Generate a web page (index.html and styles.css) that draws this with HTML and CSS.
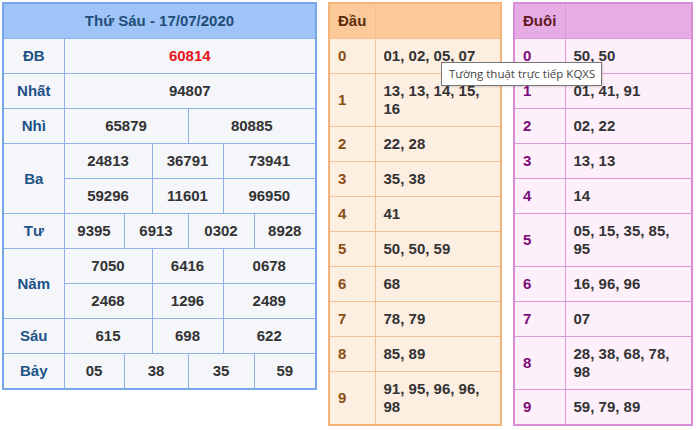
FILE: index.html
```html
<!DOCTYPE html>
<html lang="vi">
<head>
<meta charset="utf-8">
<link rel="stylesheet" href="styles.css">
</head>
<body>
<div class="page">
  <table class="kq">
    <colgroup>
      <col class="c-label"><col class="c1"><col class="c2"><col class="c3"><col class="c4"><col class="c5"><col class="c6">
    </colgroup>
    <tr><th colspan="7" class="kq-head">Thứ Sáu - 17/07/2020</th></tr>
    <tr><td class="lbl">ĐB</td><td colspan="6" class="db">60814</td></tr>
    <tr><td class="lbl">Nhất</td><td colspan="6">94807</td></tr>
    <tr><td class="lbl">Nhì</td><td colspan="3">65879</td><td colspan="3">80885</td></tr>
    <tr><td class="lbl" rowspan="2">Ba</td><td colspan="2">24813</td><td colspan="2">36791</td><td colspan="2">73941</td></tr>
    <tr><td colspan="2">59296</td><td colspan="2">11601</td><td colspan="2">96950</td></tr>
    <tr><td class="lbl">Tư</td><td>9395</td><td colspan="2">6913</td><td colspan="2">0302</td><td>8928</td></tr>
    <tr><td class="lbl" rowspan="2">Năm</td><td colspan="2">7050</td><td colspan="2">6416</td><td colspan="2">0678</td></tr>
    <tr><td colspan="2">2468</td><td colspan="2">1296</td><td colspan="2">2489</td></tr>
    <tr><td class="lbl">Sáu</td><td colspan="2">615</td><td colspan="2">698</td><td colspan="2">622</td></tr>
    <tr><td class="lbl">Bảy</td><td>05</td><td colspan="2">38</td><td colspan="2">35</td><td>59</td></tr>
  </table>

  <table class="lt dau">
    <colgroup><col class="lt-k"><col></colgroup>
    <tr><th>Đầu</th><th></th></tr>
    <tr><td class="k">0</td><td>01, 02, 05, 07</td></tr>
    <tr><td class="k">1</td><td>13, 13, 14, 15, 16</td></tr>
    <tr><td class="k">2</td><td>22, 28</td></tr>
    <tr><td class="k">3</td><td>35, 38</td></tr>
    <tr><td class="k">4</td><td>41</td></tr>
    <tr><td class="k">5</td><td>50, 50, 59</td></tr>
    <tr><td class="k">6</td><td>68</td></tr>
    <tr><td class="k">7</td><td>78, 79</td></tr>
    <tr><td class="k">8</td><td>85, 89</td></tr>
    <tr><td class="k">9</td><td>91, 95, 96, 96, 98</td></tr>
  </table>

  <table class="lt duoi">
    <colgroup><col class="lt-k"><col></colgroup>
    <tr><th>Đuôi</th><th></th></tr>
    <tr><td class="k">0</td><td>50, 50</td></tr>
    <tr><td class="k">1</td><td>01, 41, 91</td></tr>
    <tr><td class="k">2</td><td>02, 22</td></tr>
    <tr><td class="k">3</td><td>13, 13</td></tr>
    <tr><td class="k">4</td><td>14</td></tr>
    <tr><td class="k">5</td><td>05, 15, 35, 85, 95</td></tr>
    <tr><td class="k">6</td><td>16, 96, 96</td></tr>
    <tr><td class="k">7</td><td>07</td></tr>
    <tr><td class="k">8</td><td>28, 38, 68, 78, 98</td></tr>
    <tr><td class="k">9</td><td>59, 79, 89</td></tr>
  </table>

  <div class="tooltip">Tường thuật trực tiếp KQXS</div>
</div>
</body>
</html>
```

FILE: styles.css
```css
html, body {
  margin: 0;
  padding: 0;
  background: #ffffff;
}

.page {
  position: relative;
  display: flex;
  align-items: flex-start;
  padding: 2px 0 0 2px;
  font-family: "Liberation Sans", Arial, sans-serif;
  font-size: 15px;
  font-weight: bold;
  color: #333333;
}

table {
  border-collapse: collapse;
  table-layout: fixed;
  font-family: "Liberation Sans", Arial, sans-serif;
}

td, th {
  padding: 0;
  line-height: 18px;
}

/* Result table */
.kq {
  width: 313px;
  border: 2px solid #79a6e8;
  background: #f4f6fa;
}
.c-label { width: 61px; }
.c1 { width: 60px; }
.c2 { width: 28px; }
.c3 { width: 36px; }
.c4 { width: 35px; }
.c5 { width: 31px; }
.c6 { width: 62px; }

.kq td, .kq th {
  border: 1px solid #8db2e8;
  height: 34px;
  text-align: center;
}
.kq-head {
  background: #9fc4f7;
  color: #1f4e79;
  font-weight: bold;
}
.kq .lbl {
  color: #1d5287;
}
.kq .db {
  color: #e8141b;
}

/* Loto tables */
.lt td, .lt th {
  height: 34px;
  padding: 8px 8px;
  text-align: left;
  box-sizing: border-box;
}

.dau {
  width: 174px;
  margin-left: 11px;
  border: 2px solid #f3b37a;
  background: #fdeee2;
}
.dau .lt-k { width: 46px; }
.dau td, .dau th {
  border: 1px solid #f4c093;
}
.dau th {
  background: #fbc99a;
  color: #5b2c0c;
}
.dau .k {
  color: #8a4e12;
}

.duoi {
  width: 180px;
  margin-left: 11px;
  border: 2px solid #d98cd6;
  background: #fdf0fa;
}
.duoi .lt-k { width: 51px; }
.duoi td, .duoi th {
  border: 1px solid #dc9ad9;
}
.duoi th {
  background: #e6ade5;
  color: #62171f;
}
.duoi .k {
  color: #7b0d7b;
}

.tooltip {
  position: absolute;
  left: 441px;
  top: 62px;
  padding: 3px 6px 4px 7px;
  background: #ffffff;
  border: 1px solid #767676;
  font-family: "Open Sans", "Noto Sans", sans-serif;
  font-size: 11.5px;
  font-weight: normal;
  line-height: 15px;
  color: #444444;
  white-space: nowrap;
  box-shadow: 1px 1px 2px rgba(0,0,0,0.15);
}
```
